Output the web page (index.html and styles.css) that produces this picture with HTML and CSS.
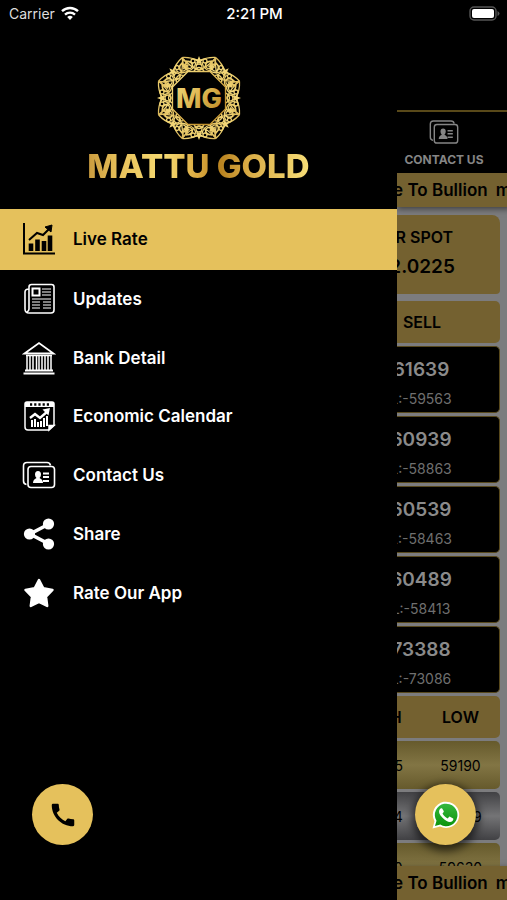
FILE: index.html
```html
<!DOCTYPE html>
<html lang="en">
<head>
<meta charset="utf-8">
<meta name="viewport" content="width=device-width, initial-scale=1">
<title>Mattu Gold</title>
<link rel="stylesheet" href="styles.css">
</head>
<body>
<header class="status">
  <span class="carrier">Carrier
    <svg width="18" height="14" viewBox="0 0 18 14" fill="none" stroke="#fff" stroke-width="2.4"><path d="M1 5.2a11.6 11.6 0 0 1 16 0M4 8.6a7.4 7.4 0 0 1 10 0"/><path d="M9 14 6.2 11.1a4 4 0 0 1 5.6 0z" fill="#fff" stroke="none"/></svg>
  </span>
  <time class="clock">2:21 PM</time>
  <svg class="battery" width="31" height="15" viewBox="0 0 31 15"><rect x="1" y="1" width="26" height="13" rx="4" fill="none" stroke="#555" stroke-width="1.4"/><rect x="3" y="3" width="22" height="9" rx="2" fill="#fff"/><path d="M28.5 5v5q2-1 2-2.500t-2-2.500z" fill="#555"/></svg>
</header>

<div class="app">
  <nav class="drawer">
    <div class="brand">
      <svg class="emblem" width="84" height="84" viewBox="-42 -42 84 84">
        <defs>
          <linearGradient id="gold" x1="-40" y1="-40" x2="40" y2="40" gradientUnits="userSpaceOnUse">
            <stop offset="0" stop-color="#b98a2c"/><stop offset=".25" stop-color="#f3d879"/><stop offset=".5" stop-color="#dcb44f"/><stop offset=".7" stop-color="#c08f2b"/><stop offset="1" stop-color="#f8e285"/>
          </linearGradient>
          <g id="motif">
            <path d="M-16.500-40.500Q-8-41 0-37Q8-41 16.500-40.500M-17-40.500Q-9-31 0-28Q9-31 17-40.500M-16-39Q-17-31-11-27Q-4-29-3-36M16-39Q17-31 11-27Q4-29 3-36M-13-37Q-7-37-6-31M13-37Q7-37 6-31M-5-27Q0-34 5-27"/>
            <circle cx="-10" cy="-33" r="3.500"/><circle cx="10" cy="-33" r="3.500"/><circle cx="0" cy="-31" r="3"/><circle cx="-6" cy="-37" r="2"/><circle cx="6" cy="-37" r="2"/>
            <path fill="url(#gold)" stroke="none" d="m0-42 1.300 3.300 3.200.2-2.500 2.200 1 3.300-3-1.900-3 1.900 1-3.300-2.500-2.200 3.200-.2zM-14-35l1.500 2 2.500 0-1.800 2 .6 2.500-2.800-1-2 1 .2-2.500-1.700-1.700 2.500-.2z"/>
          </g>
        </defs>
        <g fill="none" stroke="url(#gold)" stroke-width="1.300">
          <use href="#motif"/><use href="#motif" transform="rotate(45)"/><use href="#motif" transform="rotate(90)"/><use href="#motif" transform="rotate(135)"/><use href="#motif" transform="rotate(180)"/><use href="#motif" transform="rotate(225)"/><use href="#motif" transform="rotate(270)"/><use href="#motif" transform="rotate(315)"/>
          <path d="M-11-26.500h22L26.500-11v22L11 26.500h-22L-26.500 11v-22z"/>
        </g>
        <text class="initials" x="0" y="10" text-anchor="middle" fill="url(#gold)">MG</text>
      </svg>
      <h1 class="name">MATTU GOLD</h1>
    </div>

    <ul class="menu">
      <li class="active"><a href="#live">
        <svg viewBox="0 0 34 34" fill="none" stroke="currentColor" stroke-width="2"><path d="M2 1v30.500h31"/><path d="M7 18l8-7 6 2 7-7" stroke-width="2"/><path d="M23 5l7-2-1 7z" fill="currentColor" stroke-width="1"/><path d="M9 21.500V29M15.500 17.500V29M22 19V29M28 13.500V29" stroke-width="4.600"/></svg>
        Live Rate</a></li>
      <li><a href="#updates">
        <svg viewBox="0 0 34 34" fill="none" stroke="currentColor" stroke-width="1.600"><path d="M7 7V5q0-2.500 2.500-2.500h20Q32 2.500 32 5v23q0 3-3 3H7q-4 0-4-4V10q0-3 4-3v20q0 2-2 3"/><path d="M10.500 6.500h7v7h-7z" stroke-width="2"/><path d="M20 7h9M20 10h9M20 13h9M10 17h19M10 20h8M21 20h8M10 23h8M21 23h8M10 26h8M21 26h8" stroke-width="1.200"/></svg>
        Updates</a></li>
      <li><a href="#bank">
        <svg viewBox="0 0 34 34" fill="none" stroke="currentColor" stroke-width="1.400"><path d="M2.500 12.500 17 2l14.500 10.500z" stroke-width="1.800"/><path d="M4 14.500h26" stroke-width="1.500"/><path d="M5 15v14M8 15v14M11 15v14M14.500 15v14M17 15v14M20 15v14M23 15v14M26 15v14M29 15v14" stroke-width="1.500"/><path d="M3 29.500h28M1.500 32.500h31" stroke-width="1.800"/></svg>
        Bank Detail</a></li>
      <li><a href="#calendar">
        <svg viewBox="0 0 34 34" fill="none" stroke="currentColor" stroke-width="1.500"><path d="M26.500 31H6q-3 0-3-3V5q0-2 2-2h25q2 0 2 2v21z"/><path d="M3 3h29v5H3z" fill="currentColor" stroke="none"/><path d="M8 5.500h19" stroke="#000" stroke-width="2.500" stroke-dasharray="2.200 2"/><path d="M27 31v-4.500h5z" fill="currentColor"/><path d="m8 19 5-4 5 4 8-7" stroke-width="2.400"/><path d="m22 11 5-1-1 5z" fill="currentColor"/><path d="M10 21v7M13 20v8M16 23v5M19 22v6M22 19v9M25 17v10" stroke-width="2"/></svg>
        Economic Calendar</a></li>
      <li><a href="#contact">
        <svg viewBox="0 0 34 34"><use href="#card-icon"/></svg>
        Contact Us</a></li>
      <li><a href="#share">
        <svg viewBox="0 0 34 34" fill="currentColor"><path d="M27 7 8 17l19 10" fill="none" stroke="currentColor" stroke-width="3.600"/><circle cx="26.500" cy="7" r="5.600"/><circle cx="7.500" cy="17" r="5.600"/><circle cx="26.500" cy="27" r="5.600"/></svg>
        Share</a></li>
      <li><a href="#rate">
        <svg viewBox="0 0 34 34" fill="currentColor" stroke="currentColor" stroke-width="2.500" stroke-linejoin="round"><path d="m17 4 4.300 8.300 9.200 1.600-6.500 6.700 1.200 9.400-8.200-4-8.200 4 1.200-9.400-6.500-6.700 9.200-1.600z"/></svg>
        Rate Our App</a></li>
    </ul>

    <a class="round call" href="#call" aria-label="Call">
      <svg width="30" height="30" viewBox="0 0 24 24" fill="#000"><path d="M20.010 15.380c-1.230 0-2.420-.2-3.530-.56-.35-.12-.74-.03-1.010.24l-1.570 1.970c-2.830-1.350-5.480-3.900-6.890-6.830l1.950-1.660c.27-.28.35-.67.24-1.020-.37-1.110-.56-2.300-.56-3.530 0-.54-.45-.99-.99-.99H4.190C3.650 3 3 3.240 3 3.990 3 13.280 10.730 21 20.010 21c.71 0 .99-.63.99-1.180v-3.450c0-.54-.45-.99-.99-.99z"/></svg>
    </a>
  </nav>

  <main class="page">
    <a class="tab" href="#contact">
      <svg width="30" height="30" viewBox="0 0 34 34">
        <g id="card-icon" fill="none" stroke="currentColor" stroke-width="1.600"><path d="M4.500 26.500Q1.500 26 1.500 23V8q0-3.500 3.500-3.500h20q3 0 3.500 3"/><rect x="6" y="8.500" width="26.500" height="21" rx="3"/><path d="M21 15.500h6M21 19h6M21 23h6" stroke-width="1.800"/><path d="M16 13q3 0 3 3.500 0 2-1.500 3.500 3.500 1.500 3.500 5H11q0-3.500 3.500-5-1.500-1.500-1.500-3.500 0-3.500 3-3.500z" fill="currentColor" stroke="none"/></g>
      </svg>
      CONTACT US
    </a>
    <p class="ticker"><span>e To Bullion</span><span>m</span></p>

    <section class="cards">
      <div class="card spot"><div class="spot-body"><h2>INR SPOT</h2><strong>82.0225</strong></div></div>
      <div class="card title"><h2>SELL</h2></div>
      <div class="card rate"><div><strong>61639</strong><small>L:-59563</small></div></div>
      <div class="card rate"><div><strong>60939</strong><small>L:-58863</small></div></div>
      <div class="card rate"><div><strong>60539</strong><small>L:-58463</small></div></div>
      <div class="card rate"><div><strong>60489</strong><small>L:-58413</small></div></div>
      <div class="card rate"><div><strong>73388</strong><small>L:-73086</small></div></div>
      <div class="card range head"><b>HIGH</b><b>LOW</b></div>
      <div class="card range gold"><span>59245</span><span>59190</span></div>
      <div class="card range silver"><span>73394</span><span>73089</span></div>
      <div class="card range gold"><span>59720</span><span>59630</span></div>
    </section>

    <p class="ticker foot"><span>e To Bullion</span><span>m</span></p>
    <a class="round chat" href="#chat" aria-label="WhatsApp">
      <svg width="30" height="30" viewBox="0 0 30 30"><defs><linearGradient id="green" x2="0" y2="1"><stop stop-color="#35b83f"/><stop offset="1" stop-color="#0c930c"/></linearGradient></defs><path d="M1.500 28.500l2-7.200A13.200 13.200 0 1 1 9 26.600z" fill="#fff"/><path d="M4 26l1.500-5.200A11.300 11.300 0 1 1 9.300 24.600z" fill="url(#green)"/><path d="M11 8.300c-.7-.2-1.500 0-2 .7-2 2.500-.5 5.700 2.500 8.700 3.500 3.500 7.500 5.500 10 3.200.8-.8 1-2 .7-2.500l-3.200-1.700c-.5-.2-.8 0-1.100.4l-1.100 1.300c-2.500-1-4.200-2.600-5.300-4.800l1.200-1.700c.2-.4.1-.7 0-1z" fill="#fff"/></svg>
    </a>
  </main>
</div>
</body>
</html>
```
FILE: styles.css
```css
* { box-sizing: border-box; }

body {
  margin: 0;
  height: 100vh;
  display: flex;
  flex-direction: column;
  overflow: hidden;
  background: #000;
  color: #fff;
  font-family: Inter, "Liberation Sans", sans-serif;
}

a { color: inherit; text-decoration: none; }
h1, h2, p, ul { margin: 0; padding: 0; font-weight: 700; }

.status {
  display: grid;
  grid-template-columns: 1fr auto 1fr;
  align-items: center;
  height: 28px;
  padding: 0 7px 2px 9px;
  font-size: 14px;
}
.carrier { display: flex; align-items: center; gap: 6px; color: #ddd; }
.clock { font-size: 15px; font-weight: 500; }
.battery { justify-self: end; }

.app {
  flex: 1;
  min-height: 0;
  display: grid;
  grid-template-columns: minmax(0, 1fr) 110px;
}

.drawer { position: relative; }

.brand {
  display: flex;
  flex-direction: column;
  align-items: center;
  height: 183px;
  padding-top: 28px;
}
.emblem { display: block; }
.initials { font-size: 27px; font-weight: 800; }
.name {
  margin-top: 6px;
  font-size: 33px;
  line-height: 40px;
  font-weight: 800;
  background: linear-gradient(90deg, #c99a3d, #e9c35c 15%, #f6da72 35%, #dba93f 50%, #b98320 60%, #d9ab45 72%, #f8df78);
  background-clip: text;
  -webkit-background-clip: text;
  color: transparent;
}

.menu {
  display: grid;
  grid-auto-rows: 1fr;
  height: 411px;
  list-style: none;
}
.menu a {
  display: flex;
  align-items: center;
  gap: 17px;
  height: 100%;
  padding-left: 22px;
  font-size: 17px;
  font-weight: 600;
}
.menu svg { width: 34px; height: 34px; flex: none; }
.menu .active { margin-top: -2px; background: #e5c15c; color: #000; }

.round {
  position: absolute;
  bottom: 55px;
  display: flex;
  align-items: center;
  justify-content: center;
  width: 61px;
  height: 61px;
  border-radius: 50%;
  background: #e5c15c;
}
.call { left: 32px; }
.chat { right: 31px; box-shadow: 0 3px 8px 3px rgba(0, 0, 0, .6); }

.page {
  position: relative;
  overflow: hidden;
  margin-top: 82px;
  border-top: 2px solid #594919;
  background: #7c7c7e;
  color: #000;
}

.tab {
  display: flex;
  flex-direction: column;
  align-items: center;
  gap: 5px;
  height: 61px;
  padding: 5px 16px 0 0;
  background: #000;
  color: #858585;
  font-size: 12px;
  line-height: 15px;
  font-weight: 700;
  white-space: nowrap;
}

.ticker {
  display: flex;
  justify-content: flex-end;
  gap: 8px;
  height: 34px;
  margin-right: -4px;
  line-height: 34px;
  background: #746130;
  box-shadow: 0 2px 6px rgba(0, 0, 0, .5);
  font-size: 17px;
  font-weight: 600;
  white-space: nowrap;
}
.foot { position: absolute; bottom: 0; left: 0; right: 0; }

.cards {
  display: flex;
  flex-direction: column;
  gap: 3px;
  padding: 8px 7px 0 0;
}
.card {
  flex: none;
  display: flex;
  justify-content: flex-end;
  align-items: center;
  overflow: hidden;
  border-radius: 0 5px 5px 0;
  background: #746130;
}
.card h2 { font-size: 16px; line-height: 22px; font-weight: 600; }
.card > * { flex: none; text-align: center; }
.spot { height: 79px; margin-bottom: 4px; padding-bottom: 4px; border-radius: 0 8px 4px 0; }
.spot-body { width: 168px; }
.spot strong { display: block; margin-top: 7px; font-size: 19px; line-height: 24px; font-weight: 600; }
.title { height: 42px; }
.title h2, .rate div { width: 156px; }
.rate {
  height: 67px;
  padding-top: 8px;
  border: 1px solid #57481c;
  border-left: 0;
  background: #000;
  color: #8a8a8a;
}
.rate strong, .rate small { display: block; }
.rate strong { font-size: 19px; line-height: 22px; font-weight: 600; }
.rate small { margin-top: 9px; font-size: 14px; line-height: 18px; color: #6f6f6f; }

.range { height: 48px; font-size: 14px; }
.range > * { width: 79px; }
.head { height: 42px; font-size: 16px; }
.head b { font-weight: 600; }
.gold { background: linear-gradient(#665a2c, #827544 50%, #665a2c); }
.silver { background: linear-gradient(#414144, #747476 50%, #414144); }
```
